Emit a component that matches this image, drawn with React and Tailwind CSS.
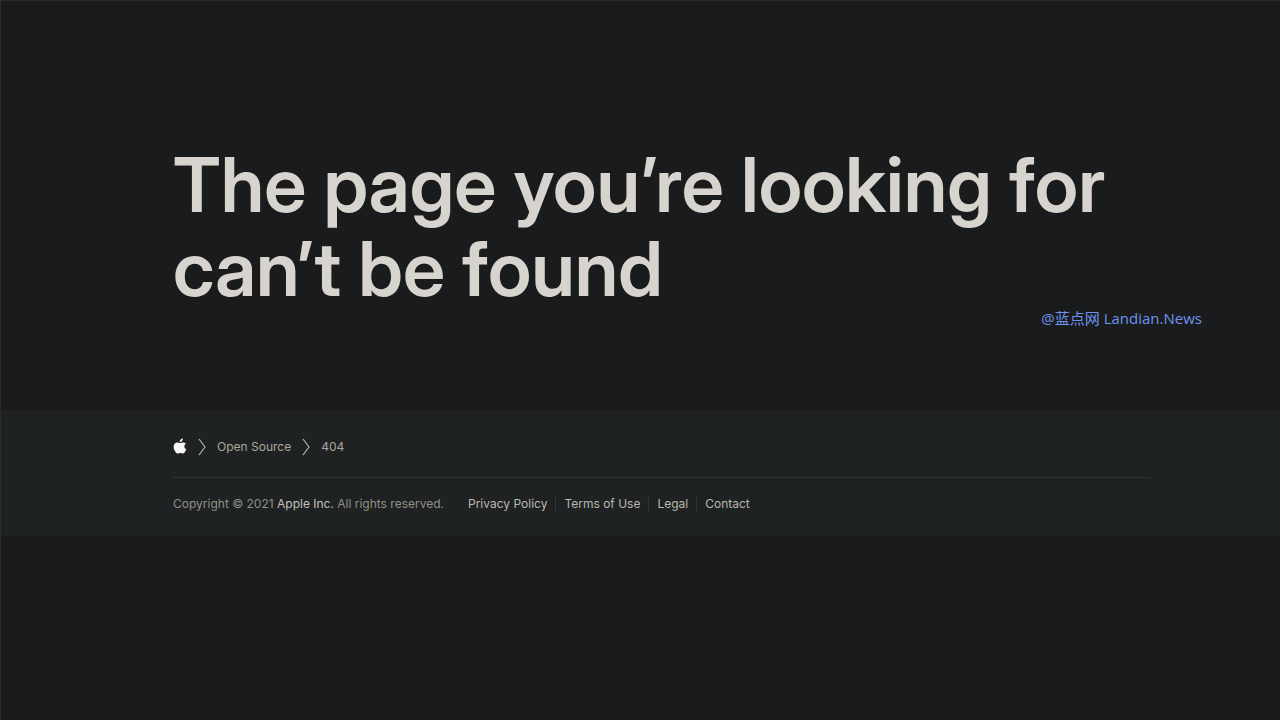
const LEGAL_LINKS = ["Privacy Policy", "Terms of Use", "Legal", "Contact"];

const CRUMBS = ["Open Source", "404"];

function AppleLogo() {
  return (
    <svg viewBox="0 0 14 17" className="w-[14px] h-[17px]" fill="#f8f6f3" aria-hidden="true">
      <path d="M9.9 0.3c0.1 1-0.3 1.9-0.9 2.6-0.6 0.7-1.4 1.1-2.2 1-0.1-0.9 0.3-1.8 0.9-2.4 0.6-0.7 1.5-1.1 2.2-1.2z" />
      <path d="M12.9 5.8c-1 0.6-1.5 1.5-1.5 2.6 0 1.3 0.7 2.3 1.9 2.8-0.3 0.9-0.8 1.8-1.3 2.6-0.6 0.9-1.2 1.7-2.2 1.7-0.9 0-1.3-0.6-2.5-0.6-1.2 0-1.6 0.6-2.5 0.6-1 0-1.7-0.9-2.4-1.8C1.3 12.5 0.6 10.8 0.6 9.1c0-2.9 1.7-4.7 3.8-4.7 1.1 0 1.9 0.7 2.8 0.7 0.7 0 1.8-0.7 3-0.7 1 0 2 0.5 2.7 1.4z" />
    </svg>
  );
}

function Chevron() {
  return (
    <svg viewBox="0 0 8 18" className="w-2 h-[18px]" fill="none" stroke="#bdb9b2" strokeWidth="1.1" aria-hidden="true">
      <path d="M1 1l6 8-6 8" />
    </svg>
  );
}

export default function App() {
  return (
    <div className="min-h-screen bg-[#1a1b1c] border-t border-l border-[#2b2c2d] font-['Inter',sans-serif]">
      <main className="pt-[141px] pb-[84px]">
        <h1 className="pl-[172px] pr-[130px] text-[76px] leading-[84px] font-semibold text-[#d7d3ce] font-['Inter_Display','Inter',sans-serif]">
          The page you’re looking for can’t be found
        </h1>
        <p className="pr-[78px] text-right text-[15px] leading-4 text-[#6f93f0] font-['Open_Sans','Noto_Sans_CJK_SC',sans-serif]">
          @蓝点网 Landian.News
        </p>
      </main>

      <footer className="bg-[#1e2222] pl-[172px] pr-[130px] pt-6 pb-[22px] text-xs leading-5">
        <nav aria-label="Breadcrumbs" className="flex items-center pt-[3px] pb-5 border-b border-[#2f3333] text-[#aca69d]">
          <a href="#" aria-label="Apple" className="pb-0.5">
            <AppleLogo />
          </a>
          {CRUMBS.map((crumb) => (
            <div key={crumb} className="flex items-center gap-[11px] ml-[11px]">
              <Chevron />
              <a href="#">{crumb}</a>
            </div>
          ))}
        </nav>

        <div className="flex items-center gap-6 pt-4">
          <p className="text-[#938e86]">
            Copyright © 2021{" "}
            <a href="#" className="text-[#c5c1ba]">Apple Inc.</a>{" "}
            All rights reserved.
          </p>
          <ul className="flex items-center text-[#bcb7af]">
            {LEGAL_LINKS.map((label) => (
              <li
                key={label}
                className="leading-4 pr-2 mr-2 border-r border-[#303434] last:border-0 last:pr-0 last:mr-0"
              >
                <a href="#">{label}</a>
              </li>
            ))}
          </ul>
        </div>
      </footer>
    </div>
  );
}
